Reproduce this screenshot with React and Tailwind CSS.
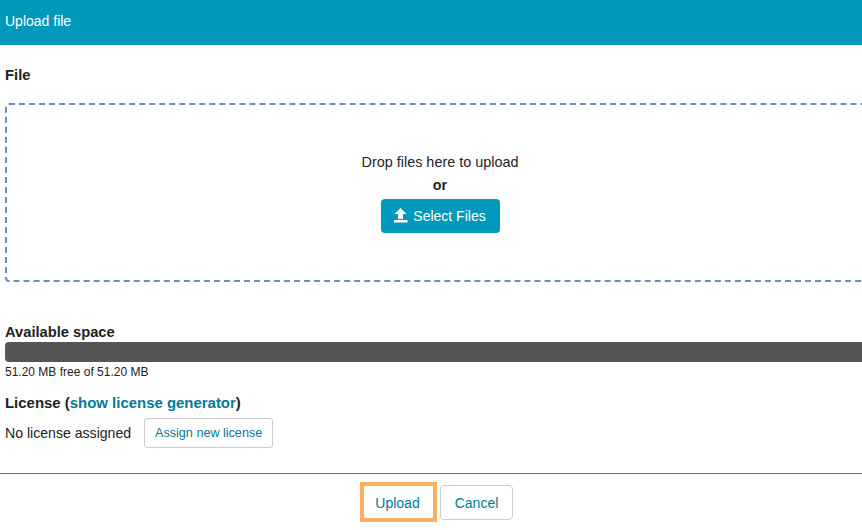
import React from "react";

function UploadIcon() {
  return (
    <svg width="14" height="15" viewBox="0 0 14 15" className="mr-[5px] -mt-[2px]" fill="#fff">
      <path d="M6.5 0 L12.5 6 H9 V11 H4 V6 H0.5 Z" />
      <rect x="0" y="12" width="13.5" height="2.5" />
    </svg>
  );
}

export default function App() {
  return (
    <div className="w-[862px] h-[530px] overflow-hidden bg-white text-[#222222] text-[14px] font-['Liberation_Sans',Arial,sans-serif]">
      <div className="h-[45px] bg-[#0099bb] text-white flex items-center px-[5px] text-[14px] pb-[2px]">Upload file</div>

      <div className="pl-[5px]">
        <div className="mt-[22px] h-[16px] leading-[16px] font-bold text-[14.8px]">File</div>

        <div className="mt-[20px] w-[900px] h-[179px] border-2 border-dashed border-[#6c8ebf] rounded-[4px] flex flex-col items-center pr-[30px]">
          <div className="mt-[47px] h-[20px] leading-[20px] text-[14.4px]">Drop files here to upload</div>
          <div className="mt-[3px] h-[20px] leading-[20px] font-bold text-[14.4px]">or</div>
          <div className="mt-[4px] h-[34px] w-[119px] bg-[#0099bb] text-white rounded-[4px] flex items-center justify-center">
            <UploadIcon />
            <span>Select Files</span>
          </div>
        </div>

        <div className="mt-[42px] h-[16px] leading-[16px] font-bold text-[14.7px]">Available space</div>
        <div className="mt-[2px] h-[20px] w-[900px] bg-[#555555] rounded-[4px]"></div>
        <div className="mt-[2px] h-[16px] leading-[16px] text-[12px]">51.20 MB free of 51.20 MB</div>

        <div className="mt-[15px] h-[16px] leading-[16px] font-bold text-[14.95px]">
          License (<span className="text-[#007a99]">show license generator</span>)
        </div>
        <div className="mt-[7px] flex items-center h-[30px]">
          <span className="text-[14.1px] pt-[2px]">No license assigned</span>
          <div className="ml-[13px] h-[30px] w-[129px] border border-[#cccccc] rounded-[3px] text-[#007a99] text-[12.6px] flex items-center justify-center">Assign new license</div>
        </div>
      </div>

      <div className="mt-[25px] border-t border-[#0a94b0] h-[9px]"></div>
      <div className="flex items-center justify-center pl-[11px] gap-[3px]">
        <div className="w-[77px] h-[40px] border-[4px] border-[#ffad60] text-[#007a99] flex items-center justify-center pt-[2px] pr-[2px]">Upload</div>
        <div className="w-[73px] h-[35px] border border-[#cccccc] rounded-[4px] text-[#007a99] flex items-center justify-center pt-[2px]">Cancel</div>
      </div>
    </div>
  );
}
